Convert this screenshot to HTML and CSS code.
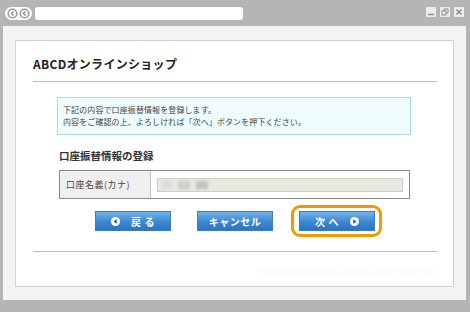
FILE: index.html
```html
<!DOCTYPE html>
<html lang="ja">
<head>
    <meta charset="UTF-8">
    <meta name="viewport" content="width=device-width, initial-scale=1.0">
    <title>ABCDオンラインショップ</title>
    <link rel="stylesheet" href="styles.css">
</head>
<body>
    <div class="window">
        <div class="titlebar">
            <svg class="nav-btns" width="27" height="13" viewBox="0 0 27 13">
                <rect x="0" y="0" width="27" height="13" rx="6.5" fill="#fff"/>
                <circle cx="7.5" cy="6.5" r="4.3" fill="none" stroke="#9a9a9a" stroke-width="1.6"/>
                <path d="M8.6 4.4 L6.4 6.5 L8.6 8.6" fill="none" stroke="#9a9a9a" stroke-width="1.5"/>
                <circle cx="19.5" cy="6.5" r="4.3" fill="none" stroke="#9a9a9a" stroke-width="1.6"/>
                <path d="M20.6 4.4 L18.4 6.5 L20.6 8.6" fill="none" stroke="#9a9a9a" stroke-width="1.5"/>
            </svg>
            <div class="urlbar"></div>
            <div class="win-ctrls">
                <span class="ctrl">
                    <svg width="10" height="10" viewBox="0 0 10 10"><path d="M2 7.5 H8" stroke="#8c8c8c" stroke-width="1.5"/></svg>
                </span>
                <span class="ctrl">
                    <svg width="10" height="10" viewBox="0 0 10 10"><rect x="2" y="4" width="4" height="4" fill="none" stroke="#8c8c8c"/><path d="M4 4 V2 H8 V6 H6" fill="none" stroke="#8c8c8c"/></svg>
                </span>
                <span class="ctrl">
                    <svg width="10" height="10" viewBox="0 0 10 10"><path d="M2.5 2.5 L7.5 7.5 M7.5 2.5 L2.5 7.5" stroke="#8c8c8c" stroke-width="1.5"/></svg>
                </span>
            </div>
        </div>

        <div class="panel">
            <div class="card">
                <h1 class="shop-title">ABCDオンラインショップ</h1>

                <div class="notice">
                    <p>下記の内容で口座振替情報を登録します。</p>
                    <p>内容をご確認の上、よろしければ「次へ」ボタンを押下ください。</p>
                </div>

                <h2 class="section-title">口座振替情報の登録</h2>

                <div class="form-row">
                    <div class="form-label">口座名義(カナ)</div>
                    <div class="form-value">
                        <div class="input-field">
                            <span class="blur blur-a"></span>
                            <span class="blur blur-b"></span>
                            <span class="blur blur-c"></span>
                        </div>
                    </div>
                </div>

                <div class="buttons">
                    <a class="btn">
                        <svg class="btn-icon" width="9" height="9" viewBox="0 0 9 9"><circle cx="4.5" cy="4.5" r="4.5" fill="#fff"/><path d="M5.8 2.3 L2.6 4.5 L5.8 6.7 Z" fill="#1b57a6"/></svg>
                        <span>戻 る</span>
                    </a>
                    <a class="btn">
                        <span>キャンセル</span>
                    </a>
                    <a class="btn btn-next">
                        <span>次 へ</span>
                        <svg class="btn-icon" width="9" height="9" viewBox="0 0 9 9"><circle cx="4.5" cy="4.5" r="4.5" fill="#fff"/><path d="M3.2 2.3 L6.4 4.5 L3.2 6.7 Z" fill="#1b57a6"/></svg>
                    </a>
                </div>

                <div class="footer">
                    <span class="faint">Copyright ABCD Online Shop All Rights Reserved.</span>
                </div>
            </div>
        </div>
    </div>
</body>
</html>
```

FILE: styles.css
```css
body {
    margin: 0;
    font-family: "Noto Sans CJK JP", "Liberation Sans", sans-serif;
    color: #333;
}
.window {
    width: 470px;
    height: 312px;
    background-color: #b5b5b5;
    overflow: hidden;
}
.titlebar {
    height: 26px;
    display: flex;
    align-items: center;
    padding: 1px 6px 0 5px;
    box-sizing: border-box;
}
.nav-btns {
    display: block;
}
.urlbar {
    width: 208px;
    height: 13px;
    margin-left: 3px;
    background: #fff;
    border-radius: 3px;
}
.win-ctrls {
    margin-left: auto;
    display: flex;
    gap: 4px;
    margin-top: -3px;
}
.ctrl {
    width: 10px;
    height: 10px;
    background: #ececec;
    border-radius: 1px;
}
.ctrl svg {
    display: block;
}
.panel {
    height: 274px;
    margin: 0 4px 0 3px;
    background: #f3f3f3;
    padding: 14px 12px 0;
    box-sizing: border-box;
}
.card {
    height: 247px;
    box-sizing: border-box;
    background: #fff;
    border: 1px solid #d2d2d2;
    padding: 0 16px 0 17px;
}
.shop-title {
    margin: 0;
    padding: 14px 0 8px;
    font-size: 12px;
    line-height: 18px;
    font-weight: bold;
    letter-spacing: 0.3px;
    color: #222;
    border-bottom: 1px solid #8fd0d2;
}
.notice {
    width: 354px;
    margin: 15px 0 0 24px;
    box-sizing: border-box;
    background: #effcfd;
    border: 1px solid #a9dcdc;
    padding: 6px 5px;
}
.notice p {
    margin: 0;
    font-size: 8px;
    line-height: 12px;
    letter-spacing: 0.1px;
    color: #444;
}
.section-title {
    margin: 14px 0 0 26px;
    font-size: 10.5px;
    line-height: 14px;
    font-weight: bold;
    color: #333;
}
.form-row {
    display: grid;
    grid-template-columns: 91px 1fr;
    width: 351px;
    height: 29px;
    margin: 7px 0 0 26px;
    box-sizing: border-box;
    border: 1px solid #8a8a8a;
}
.form-label {
    background: #f0f0f0;
    border-right: 1px solid #c4c4c4;
    font-size: 9px;
    line-height: 27px;
    padding-left: 6px;
    letter-spacing: 0.5px;
    color: #444;
}
.form-value {
    display: flex;
    align-items: center;
    padding: 0 6px;
}
.input-field {
    flex: 1;
    height: 14px;
    box-sizing: border-box;
    background: #e8e8e1;
    border: 1px solid #cfcfc8;
    display: flex;
    align-items: center;
    padding-left: 4px;
}
.blur {
    height: 8px;
    filter: blur(1px);
    background: #cfcfcb;
}
.blur-a {
    width: 10px;
    background: #dcdcd8;
}
.blur-b {
    width: 12px;
    margin-left: 6px;
}
.blur-c {
    width: 12px;
    margin-left: 6px;
    background: #c4c4c0;
}
.buttons {
    display: flex;
    justify-content: center;
    gap: 26px;
    margin-top: 12px;
}
.btn {
    position: relative;
    width: 76px;
    height: 20px;
    box-sizing: border-box;
    display: flex;
    align-items: center;
    justify-content: center;
    gap: 11px;
    background: linear-gradient(#73b4ea, #3c87d1 55%, #2b74c4);
    border: 1px solid #3a7cc2;
    color: #fff;
    font-size: 10px;
    font-weight: bold;
    letter-spacing: 0.5px;
}
.btn-icon {
    display: block;
}
.btn-next::before {
    content: "";
    position: absolute;
    top: -7px;
    bottom: -7px;
    left: -9px;
    right: -8px;
    border: 3px solid #f39800;
    border-radius: 9px;
}
.footer {
    margin-top: 20px;
    border-top: 1px solid #8fd0d2;
    text-align: right;
    padding-top: 4px;
}
.faint {
    font-size: 8px;
    color: #f9f9f9;
}
```
